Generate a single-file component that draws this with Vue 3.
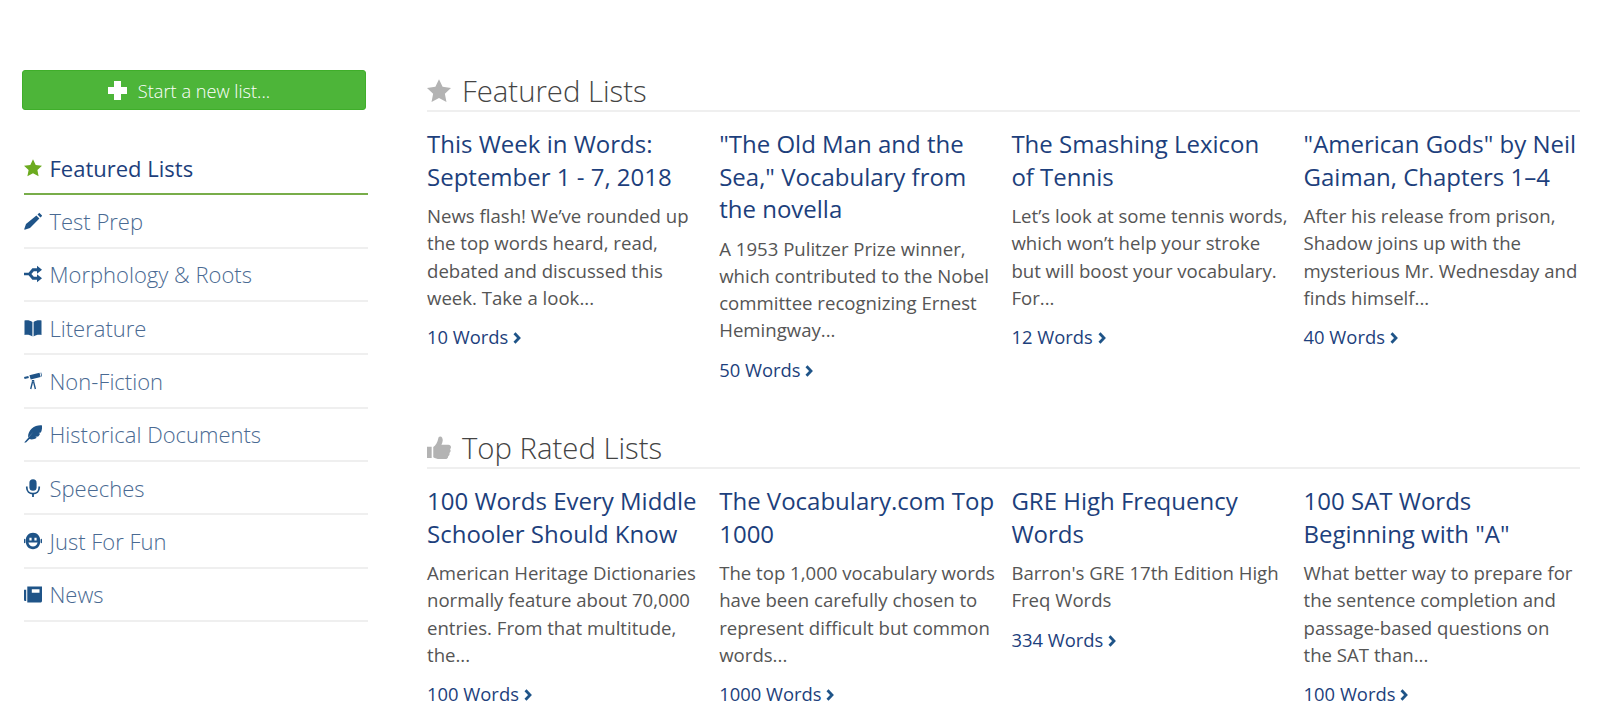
<template>
  <div class="page">
    <aside class="sidebar">
      <button class="new-list">
        <svg class="plus" viewBox="0 0 19 19"><path d="M6 0h7v6h6v7h-6v6H6v-6H0V6h6z" /></svg>
        <span>Start a new list...</span>
      </button>
      <ul class="nav">
        <li v-for="item in navItems" :key="item.label" :class="{ active: item.active }">
          <svg class="nav-icon" viewBox="0 0 18 18" v-html="icons[item.icon]"></svg>
          <span>{{ item.label }}</span>
        </li>
      </ul>
    </aside>

    <main class="content">
      <section v-for="section in sections" :key="section.title" class="section">
        <h2>
          <svg class="head-icon" viewBox="0 0 18 18" v-html="icons[section.icon]"></svg>
          <span>{{ section.title }}</span>
        </h2>
        <div class="cards">
          <article v-for="card in section.cards" :key="card.title" class="card">
            <h3>{{ card.title }}</h3>
            <p>{{ card.text }}</p>
            <a class="count">{{ card.words }} Words <svg class="chev" viewBox="0 0 8 12"><path d="M1.500 1.200 6 6l-4.500 4.800" /></svg></a>
          </article>
        </div>
      </section>
    </main>
  </div>
</template>

<script setup>
const icons = {
  star: '<path d="M9 .2l2.700 5.700 6.300.8-4.600 4.300 1.200 6.200L9 14.200l-5.600 3 1.200-6.200L0 6.700l6.300-.8z"/>',
  pencil: '<path d="M12.400 3.600l3 3L6 16l-5.300 1.800-.5-.5L2 12zM13.500 2.500l1.800-1.800 3 3-1.800 1.800z"/>',
  fork: '<path d="M0 7.700h4.600l3.800-4.400H13V.8l5 4-5 4V6.200H9.800L7.400 9l2.400 2.800H13V9.200l5 4-5 4v-2.500H8.400L4.600 10.300H0z"/>',
  book: '<path d="M.5 1.500c3-.6 6 0 7.900 1.500v14.500c-2-1.400-4.900-2-7.900-1.400zM9.600 3c1.900-1.500 4.900-2.100 7.900-1.500v14.600c-3-.6-5.900 0-7.900 1.400z"/>',
  scope: '<path d="M0 4.900l4.300-1 .6 2.100-4.300 1zM5.400 3.300L15.500.7l1.200 4.300-10 2.600zM17.200.5l1 4-.7.200-1-4zM7.900 8h2.300v1.600H7.900z"/><path d="M8.600 9.400 6.700 17M9.500 9.400l1.900 7.600" fill="none" stroke="currentColor" stroke-width="1.400"/>',
  feather: '<path d="M18 .4c.3 2.500-.2 5-1.100 7.100l-2.300.4 1.500.9c-.5 1-1.200 1.800-1.900 2.600l-2.800.3 1.400 1c-2.400 1.700-5 2-7.300 1.400L2 17.600H.2L9.500 6.800 4.200 12.600C3.700 9.400 5 6 7.800 3.500 10.700 1 14.600 0 18 .4z"/>',
  mic: '<rect x="5.400" y="0.300" width="7.200" height="11.500" rx="3.600"/><path d="M2.800 7.500v1.300c0 3.500 2.700 5.800 6.200 5.800s6.200-2.300 6.200-5.800V7.500" fill="none" stroke="currentColor" stroke-width="1.700"/><path d="M8.100 14h1.800v4H8.100z"/>',
  robot: '<path fill-rule="evenodd" d="M9 .8c4.300 0 7.300 3.300 7.300 8.200S13.300 17.200 9 17.200 1.700 13.900 1.700 9 4.700.8 9 .8zM5.400 5.800v2.700h2.200V5.800zm5 0v2.700h2.200V5.800zM4.400 10.600c.6 2.500 2.400 4 4.600 4s4-1.500 4.600-4z"/><rect x="0" y="6.800" width="1.300" height="4.400" rx=".6"/><rect x="16.700" y="6.800" width="1.300" height="4.400" rx=".6"/>',
  news: '<path fill-rule="evenodd" d="M3.300 1.500H18v14.500c0 .8-.7 1.500-1.500 1.500H3.300zM7.800 4.200v3.600h7.700V4.200z"/><path d="M0 4.800h2.200v11.300H1.500C.6 16.100 0 15.400 0 14.500z"/>',
  thumb: '<path d="M0 8h3.500v8.500H0zM4.700 8.200c1.600-1 3.300-3.600 3.700-6.200.1-1 .5-1.700 1.400-1.700 1.500 0 2.100 1.600 2 3.100-.1 1.200-.5 2.200-1 3.200h5.300c1.100 0 1.900.8 1.900 1.800 0 .6-.3 1.100-.7 1.500.3.400.4.800.4 1.200 0 .7-.4 1.300-.9 1.600.1.300.1.500.1.800 0 .7-.4 1.300-1 1.600 0 1.300-.9 2.200-2.200 2.200H9.500c-1.900 0-3.400-.7-4.800-1.400z"/>'
}

const navItems = [
  { label: 'Featured Lists', icon: 'star', active: true },
  { label: 'Test Prep', icon: 'pencil' },
  { label: 'Morphology & Roots', icon: 'fork' },
  { label: 'Literature', icon: 'book' },
  { label: 'Non-Fiction', icon: 'scope' },
  { label: 'Historical Documents', icon: 'feather' },
  { label: 'Speeches', icon: 'mic' },
  { label: 'Just For Fun', icon: 'robot' },
  { label: 'News', icon: 'news' }
]

const sections = [
  {
    title: 'Featured Lists',
    icon: 'star',
    cards: [
      { title: 'This Week in Words: September 1 - 7, 2018', text: 'News flash! We’ve rounded up the top words heard, read, debated and discussed this week. Take a look...', words: 10 },
      { title: '"The Old Man and the Sea," Vocabulary from the novella', text: 'A 1953 Pulitzer Prize winner, which contributed to the Nobel committee recognizing Ernest Hemingway...', words: 50 },
      { title: 'The Smashing Lexicon of Tennis', text: 'Let’s look at some tennis words, which won’t help your stroke but will boost your vocabulary. For...', words: 12 },
      { title: '"American Gods" by Neil Gaiman, Chapters 1–4', text: 'After his release from prison, Shadow joins up with the mysterious Mr. Wednesday and finds himself...', words: 40 }
    ]
  },
  {
    title: 'Top Rated Lists',
    icon: 'thumb',
    cards: [
      { title: '100 Words Every Middle Schooler Should Know', text: 'American Heritage Dictionaries normally feature about 70,000 entries. From that multitude, the...', words: 100 },
      { title: 'The Vocabulary.com Top 1000', text: 'The top 1,000 vocabulary words have been carefully chosen to represent difficult but common words...', words: 1000 },
      { title: 'GRE High Frequency Words', text: 'Barron\'s GRE 17th Edition High Freq Words', words: 334 },
      { title: '100 SAT Words Beginning with "A"', text: 'What better way to prepare for the sentence completion and passage-based questions on the SAT than...', words: 100 }
    ]
  }
]
</script>

<style scoped>
.page {
  display: flex;
  height: 726px;
  box-sizing: border-box;
  overflow: hidden;
  padding: 70px 20px 0 22px;
  background: #fff;
  font-family: "Open Sans", sans-serif;
}
.sidebar {
  width: 346px;
  flex: none;
}
.new-list {
  display: flex;
  align-items: center;
  justify-content: center;
  gap: 11px;
  width: 344px;
  height: 40px;
  padding: 1px 10px 0 0;
  border: 1px solid #3fae2a;
  border-radius: 3px;
  background: #4db539;
  color: #fff;
  font-family: inherit;
  font-size: 18.200px;
  font-weight: 300;
}
.plus {
  width: 19px;
  height: 19px;
  fill: #fff;
}
.nav {
  list-style: none;
  margin: 32px 0 0 1.500px;
  padding: 0;
}
.nav li {
  display: flex;
  align-items: center;
  gap: 8px;
  height: 51.350px;
  border-bottom: 2px solid #efefef;
  color: #4a6a92;
  font-size: 22px;
  font-weight: 300;
}
.nav li.active {
  border-bottom-color: #78ad4a;
  color: #1d3f7c;
  font-weight: 400;
}
.nav-icon {
  width: 18px;
  height: 18px;
  flex: none;
  fill: #1f5488;
  color: #1f5488;
}
.active .nav-icon {
  fill: #6cab1f;
}
.content {
  margin-left: 59px;
  flex: 1;
  min-width: 0;
}
.section {
  height: 357px;
}
h2 {
  display: flex;
  align-items: center;
  gap: 11px;
  box-sizing: border-box;
  height: 42px;
  margin: 0;
  padding-top: 2px;
  border-bottom: 2px solid #efefef;
  color: #444;
  font-size: 29.300px;
  font-weight: 300;
}
.head-icon {
  width: 24px;
  height: 24px;
  flex: none;
  fill: #b3b3b3;
}
.cards {
  display: grid;
  grid-template-columns: repeat(4, 276.500px);
  column-gap: 15.700px;
  padding-top: 16px;
}
h3 {
  margin: 0;
  color: #1d3f7c;
  font-size: 24px;
  font-weight: 400;
  line-height: 32.600px;
}
.card p {
  margin: 9px 0 0;
  color: #555;
  font-size: 18.600px;
  line-height: 27.200px;
}
.count {
  display: block;
  margin-top: 12px;
  color: #1d3f7c;
  font-size: 18.400px;
  line-height: 27px;
}
.chev {
  width: 8px;
  height: 12px;
  fill: none;
  stroke: #1f5488;
  stroke-width: 2.800;
}
</style>
